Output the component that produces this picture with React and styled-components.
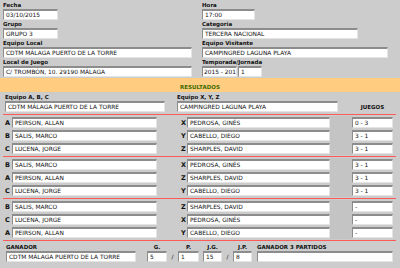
import React from "react";
import styled, { createGlobalStyle } from "styled-components";

const GlobalStyle = createGlobalStyle`
  html, body { margin: 0; padding: 0; background: #cccccc; }
  body { font-family: "DejaVu Sans", Verdana, sans-serif; color: #111; }
`;

const Page = styled.div`
  width: 400px;
  height: 268px;
  background: #cccccc;
  overflow: hidden;
`;

const Header = styled.div`
  display: grid;
  grid-template-columns: 199px 1fr;
  padding: 1px 0 0 3px;
`;

const Column = styled.div`
  display: flex;
  flex-direction: column;
`;

const Label = styled.div`
  height: 8px;
  line-height: 8px;
  font-size: 5.5px;
  font-weight: bold;
  color: #111;
  white-space: nowrap;
`;

const Box = styled.div`
  box-sizing: border-box;
  width: ${(p) => p.$w}px;
  height: 11px;
  background: #fff;
  border-style: solid;
  border-width: 2px 1px 1px 1px;
  border-color: #8c8c8c #e4e4e4 #e4e4e4 #8c8c8c;
  padding: 0 ${(p) => (p.$pad != null ? p.$pad : 2)}px;
  font-size: 5.9px;
  line-height: 8px;
  color: #111;
  white-space: nowrap;
  overflow: hidden;
`;

const Pair = styled.div`
  display: flex;
  gap: 1px;
`;

const Band = styled.div`
  margin-top: 1px;
  height: 14px;
  background: #ffcc80;
  display: flex;
  align-items: flex-end;
  justify-content: center;
  font-size: 5.5px;
  font-weight: bold;
  color: #3d6b00;
  line-height: 8px;
  padding-bottom: 1px;
  box-sizing: border-box;
`;

const TeamsRow = styled.div`
  display: flex;
  align-items: flex-end;
  padding: 1px 0 2px 5px;
`;

const Cell = styled.div`
  width: ${(p) => p.$w}px;
  margin-right: ${(p) => p.$gap || 0}px;
  display: flex;
  flex-direction: column;
`;

const Juegos = styled.div`
  width: 41px;
  text-align: center;
  font-size: 5.5px;
  font-weight: bold;
  line-height: 8px;
  margin-bottom: 1px;
`;

const Group = styled.div`
  margin: 0 4px 0 3px;
  border-top: 1px solid #ff5a5a;
  padding: 1px 0;
`;

const MatchRow = styled.div`
  display: grid;
  grid-template-columns: 9px 145px 22px 8px 143px 22px 41px;
  align-items: center;
  height: 13px;
`;

const Letter = styled.div`
  font-size: 6.5px;
  font-weight: bold;
  color: #111;
  padding-left: 2px;
`;

const Gap = styled.div`
  align-self: stretch;
  background: ${(p) => (p.$dark ? "#c4c4c4" : "transparent")};
`;

const Footer = styled.div`
  margin: 0 4px 0 3px;
  border-top: 1px solid #ff5a5a;
  padding: 2px 0 0 3px;
  display: flex;
  align-items: flex-end;
`;

const Slash = styled.div`
  width: ${(p) => p.$w}px;
  text-align: center;
  font-size: 6px;
  line-height: 11px;
`;

const CenterLabel = styled(Label)`
  text-align: center;
`;

const groups = [
  [
    ["A", "PEIRSON, ALLAN", "X", "PEDROSA, GINÉS", "0 - 3"],
    ["B", "SALIS, MARCO", "Y", "CABELLO, DIEGO", "3 - 1"],
    ["C", "LUCENA, JORGE", "Z", "SHARPLES, DAVID", "3 - 1"],
  ],
  [
    ["B", "SALIS, MARCO", "X", "PEDROSA, GINÉS", "3 - 1"],
    ["A", "PEIRSON, ALLAN", "Z", "SHARPLES, DAVID", "3 - 1"],
    ["C", "LUCENA, JORGE", "Y", "CABELLO, DIEGO", "3 - 1"],
  ],
  [
    ["B", "SALIS, MARCO", "Z", "SHARPLES, DAVID", "-"],
    ["C", "LUCENA, JORGE", "X", "PEDROSA, GINÉS", "-"],
    ["A", "PEIRSON, ALLAN", "Y", "CABELLO, DIEGO", "-"],
  ],
];

const Field = ({ label, w, children }) => (
  <div>
    <Label>{label}</Label>
    {children || <Box $w={w} />}
  </div>
);

export default function App() {
  return (
    <Page>
      <GlobalStyle />
      <Header>
        <Column>
          <Field label="Fecha"><Box $w={55}>03/10/2015</Box></Field>
          <Field label="Grupo"><Box $w={55}>GRUPO 3</Box></Field>
          <Field label="Equipo Local"><Box $w={189}>CDTM MÁLAGA PUERTO DE LA TORRE</Box></Field>
          <Field label="Local de Juego"><Box $w={189}>C/ TROMBÓN, 10. 29190 MÁLAGA</Box></Field>
        </Column>
        <Column>
          <Field label="Hora"><Box $w={53}>17:00</Box></Field>
          <Field label="Categoria"><Box $w={156}>TERCERA NACIONAL</Box></Field>
          <Field label="Equipo Visitante"><Box $w={186}>CAMPINGRED LAGUNA PLAYA</Box></Field>
          <Field label="Temporada/Jornada">
            <Pair>
              <Box $w={35} $pad={1}>2015 - 201</Box>
              <Box $w={24}>1</Box>
            </Pair>
          </Field>
        </Column>
      </Header>

      <Band>RESULTADOS</Band>

      <TeamsRow>
        <Cell $w={160} $gap={12}>
          <Label>Equipo A, B, C</Label>
          <Box $w={160}>CDTM MÁLAGA PUERTO DE LA TORRE</Box>
        </Cell>
        <Cell $w={161} $gap={14}>
          <Label>Equipo X, Y, Z</Label>
          <Box $w={161}>CAMPINGRED LAGUNA PLAYA</Box>
        </Cell>
        <Juegos>JUEGOS</Juegos>
      </TeamsRow>

      {groups.map((rows, gi) => (
        <Group key={gi}>
          {rows.map(([l, home, r, away, score], ri) => (
            <MatchRow key={ri}>
              <Letter>{l}</Letter>
              <Box $w={145}>{home}</Box>
              <Gap />
              <Letter>{r}</Letter>
              <Box $w={143}>{away}</Box>
              <Gap $dark />
              <Box $w={41}>{score}</Box>
            </MatchRow>
          ))}
        </Group>
      ))}

      <Footer>
        <Cell $w={130} $gap={11}>
          <Label>GANADOR</Label>
          <Box $w={130}>CDTM MÁLAGA PUERTO DE LA TORRE</Box>
        </Cell>
        <Cell $w={20}>
          <CenterLabel>G.</CenterLabel>
          <Box $w={20}>5</Box>
        </Cell>
        <Slash $w={11}>/</Slash>
        <Cell $w={21} $gap={4}>
          <CenterLabel>P.</CenterLabel>
          <Box $w={21}>1</Box>
        </Cell>
        <Cell $w={19}>
          <CenterLabel>J.G.</CenterLabel>
          <Box $w={19}>15</Box>
        </Cell>
        <Slash $w={11}>/</Slash>
        <Cell $w={19} $gap={5}>
          <CenterLabel>J.P.</CenterLabel>
          <Box $w={19}>8</Box>
        </Cell>
        <Cell $w={136}>
          <Label>GANADOR 3 PARTIDOS</Label>
          <Box $w={136} />
        </Cell>
      </Footer>
    </Page>
  );
}
